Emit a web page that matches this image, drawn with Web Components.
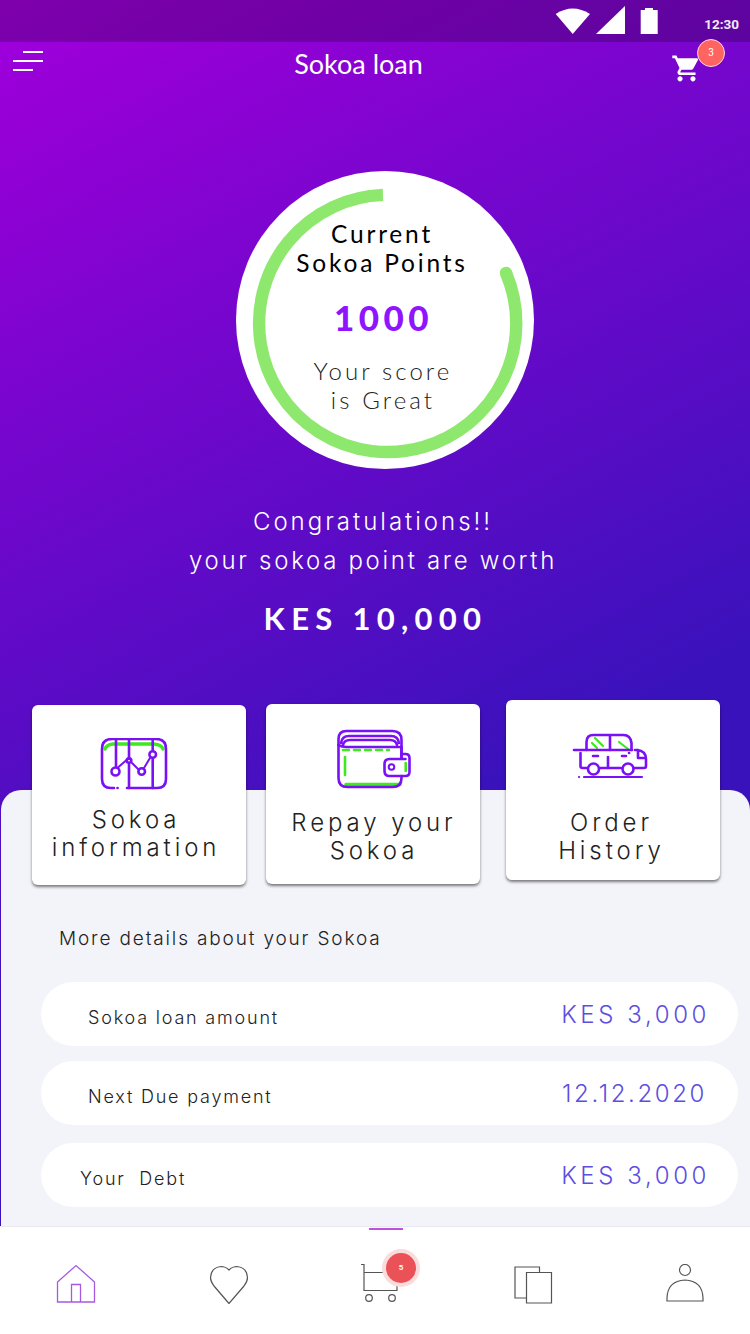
<!DOCTYPE html>
<html>
<head>
<meta charset="utf-8">
<title>Sokoa loan</title>
<style>
  html, body { margin: 0; padding: 0; }
  body { width: 750px; height: 1334px; overflow: hidden; font-family: "Lato", sans-serif; }
  info-card svg { display: block; }
</style>
</head>
<body>
<sokoa-app>
  <status-bar time="12:30"></status-bar>
  <app-header title="Sokoa loan" count="3"></app-header>
  <score-ring points="1000"></score-ring>
  <worth-note amount="KES 10,000"></worth-note>

  <card-row>
    <info-card style="--top:5px;--pad:33px;--gap:16px;--shift:-6px;--icon:-10px">
      <svg slot="icon" width="68" height="52" viewBox="100 738 68 52" fill="none" stroke="#7a10f5" stroke-width="2.6" stroke-linecap="round" stroke-linejoin="round">
        <path d="M105 749q1-4 8-5h41q8 1 9 5" stroke="#3fe81f" stroke-width="3.4"/>
        <path d="M114 788h-3q-9 0-9-9v-30q0-10 10-10h44q10 0 10 10v30q0 9-9 9h-30"/>
        <path d="M117.5 788h.1"/>
        <path d="M116 740v27M129 740v19M129 764v24M152.700 740v10M152.700 759v29"/>
        <circle cx="115.500" cy="771.500" r="4"/><circle cx="129" cy="760.500" r="2.300"/><circle cx="141.700" cy="771.500" r="3.300"/><circle cx="152.700" cy="754.500" r="3.300"/>
        <path d="M118.500 767l7.500-6.500M132 763l6 6M144 768l6-10" stroke-width="2"/>
      </svg>
      Sokoa<br>information
    </info-card>
    <info-card style="--top:4px;--pad:25px;--gap:20px;--shift:2px;--icon:2px">
      <svg slot="icon" width="76" height="60" viewBox="336 729 76 60" fill="none" stroke="#7a10f5" stroke-width="2.6" stroke-linecap="round" stroke-linejoin="round">
        <path d="M346 784.500h54" stroke="#3fe81f" stroke-width="3.400"/>
        <path d="M343 750h46" stroke="#3fe81f" stroke-dasharray="6 5"/>
        <path d="M345 757v18M405.700 763v8" stroke="#3fe81f" stroke-width="2.600"/>
        <path d="M338.500 745v-6q0-8 8-8h46q9 0 9 9v18"/>
        <path d="M341 743q1-7 8-7h42q7 0 8 7M343 745q1-5 7-5h40q6 0 7 5"/>
        <path d="M338.500 745v33q0 9 9 9h45q9 0 9-9v-2"/>
        <path d="M338.500 745q3 2 8 2h55v11"/>
        <path d="M401.500 754h4q4 0 4 4v14q0 4-4 4h-16q-5 0-5-5v-7q0-5 5-5h16"/>
        <circle cx="391.500" cy="767" r="2.800" stroke-width="2"/>
      </svg>
      Repay your<br>Sokoa
    </info-card>
    <info-card style="--top:0px;--pad:33px;--gap:30px;--lead:6px;--shift:-3px;--icon:-6px">
      <svg slot="icon" width="76" height="46" viewBox="572 733 76 46" fill="none" stroke="#7a10f5" stroke-width="2.600" stroke-linecap="round" stroke-linejoin="round">
        <path d="M595 738l8 8M592 743l5 5M619 742l9 7" stroke="#3fe81f" stroke-width="2.200"/>
        <path d="M574 750h58"/>
        <path d="M586.500 750v-8q0-7 7-7h30q7 0 8 8v7M610 735v15"/>
        <path d="M580.500 753v13q0 2 2 2h5M600 768h21M634 768h10q2 0 2-2v-7q0-8-9-9h-2M638 750v8h8"/>
        <circle cx="593.500" cy="769" r="5.500"/><circle cx="628" cy="769" r="5.500"/>
        <path d="M593 756h5M608 757v11M622 756h4M629 753h.1"/>
        <path d="M579 777h.1M584 777h58" stroke-width="2.200"/>
      </svg>
      Order<br>History
    </info-card>
  </card-row>

  <detail-panel heading="More details about your Sokoa">
    <detail-row label="Sokoa loan amount" value="KES 3,000"></detail-row>
    <detail-row style="--after:15px;--end:31px;--space:2.600px" label="Next Due payment" value="12.12.2020"></detail-row>
    <detail-row style="--after:18px;--inset:39px" label="Your  Debt" value="KES 3,000"></detail-row>
  </detail-panel>

  <bottom-nav count="5"></bottom-nav>
</sokoa-app>

<script>
// every element keeps its own markup and styles in an open shadow root
function shadow(el, html) {
  el.attachShadow({mode: 'open'}).innerHTML = html;
}

class SokoaApp extends HTMLElement {
  connectedCallback() {
    shadow(this, `<style>
      :host { display: flex; flex-direction: column; width: 750px; height: 1334px;
        background: linear-gradient(152deg, #a200de 0, #9500d6 120px, #3a12bc 920px, #3a12bc 100%); color: #000; }
    </style><slot></slot>`);
  }
}

class StatusBar extends HTMLElement {
  connectedCallback() {
    shadow(this, `<style>
      :host { display: flex; align-items: flex-start; justify-content: flex-end; height: 42px; flex: none;
        background: rgba(0,0,0,.22); }
      svg { display: block; margin-top: 6px; }
      span { font: 700 13.500px/20px Roboto, sans-serif; color: #f4e9fa; margin: 14px 11px 0 46px; }
    </style>
    <svg width="104" height="30" viewBox="554 6 104 30" fill="#fff">
      <path d="M555.700 14Q572.700 3 590 14L572.700 34Z"/>
      <path d="M596 34L625 6V34Z"/>
      <path d="M645 10V8h8v2h4.700v24H640.700V10Z"/>
    </svg>
    <span>${this.getAttribute('time')}</span>`);
  }
}

class AppHeader extends HTMLElement {
  connectedCallback() {
    shadow(this, `<style>
      :host { display: flex; height: 44px; flex: none; color: #fff; }
      .menu { display: flex; flex-direction: column; gap: 7px; margin: 9px 0 0 13px; width: 30px; }
      .menu i { display: block; height: 2px; background: #fff; }
      .menu i:nth-child(1) { margin-left: 10px; }
      .menu i:nth-child(3) { margin-right: 10px; }
      h1 { flex: 1; margin: 0; padding-left: 2px; text-align: center; font: 400 27px/44px Lato, sans-serif; }
      .cart { position: relative; width: 78px; }
      .cart svg { display: block; margin: 11px 0 0 -1px; }
      .cart b { position: absolute; left: 25px; top: -3px; width: 26px; height: 26px; line-height: 26px; border-radius: 50%;
        border: 1px solid #ffd9df; background: #ff6461; text-align: center; font: 400 10px/26px Roboto, sans-serif; color: #fff; }
    </style>
    <div class="menu"><i></i><i></i><i></i></div>
    <h1>${this.getAttribute('title')}</h1>
    <div class="cart">
      <svg width="31" height="31" viewBox="0 0 24 24" fill="#fff"><path d="M7 18c-1.100 0-1.990.9-1.990 2S5.900 22 7 22s2-.9 2-2-.9-2-2-2zM1 2v2h2l3.600 7.590-1.350 2.450c-.16.28-.25.61-.25.96 0 1.100.9 2 2 2h12v-2H7.420c-.14 0-.25-.11-.25-.25l.03-.12.9-1.630h7.450c.75 0 1.410-.41 1.750-1.030l3.580-6.490c.08-.14.12-.31.12-.48 0-.55-.45-1-1-1H5.210l-.94-2H1zm16 16c-1.100 0-1.990.9-1.990 2s.89 2 1.990 2 2-.9 2-2-.9-2-2-2z"/></svg>
      <b>${this.getAttribute('count')}</b>
    </div>`);
  }
}

class ScoreRing extends HTMLElement {
  connectedCallback() {
    shadow(this, `<style>
      :host { display: grid; width: 298px; height: 298px; flex: none; margin: 85px 0 0 236px; border-radius: 50%;
        background: #fff; font-family: Lato, sans-serif; }
      svg, .text { grid-area: 1 / 1; }
      svg { display: block; }
      .text { text-align: center; padding: 48px 6px 0 0; }
      .title { font-size: 24.500px; line-height: 29px; font-weight: 400; letter-spacing: 2.800px; color: #000; }
      .points { font-size: 35px; line-height: 46px; font-weight: 900; letter-spacing: 4.400px; color: #8f14ff; margin: 17px 0 0 3px; }
      .note { font-size: 24px; line-height: 29px; font-weight: 300; letter-spacing: 3.100px; color: #222; margin: 15.500px 0 0 2px; }
    </style>
    <svg width="298" height="298" viewBox="236 171 298 298" fill="none">
      <path d="M383 194.900A128.600 128.600 0 1 0 506 273" stroke="#8fe86e" stroke-width="12.400"/>
      <circle cx="506" cy="273" r="6.200" fill="#8fe86e"/>
    </svg>
    <div class="text">
      <div class="title">Current<br>Sokoa Points</div>
      <div class="points">${this.getAttribute('points')}</div>
      <div class="note">Your score<br>is Great</div>
    </div>`);
  }
}

class WorthNote extends HTMLElement {
  connectedCallback() {
    shadow(this, `<style>
      :host { display: block; flex: none; text-align: center; color: #fff; padding-right: 4px; margin-top: 32.500px; }
      p { margin: 0; font: 300 24px/39px Inter, sans-serif; letter-spacing: 2.700px; }
      p span { letter-spacing: 3px; }
      strong { display: block; margin: 18.500px 0 0 5px; font: 700 31px/40px Lato, sans-serif; letter-spacing: 6.300px; }
    </style>
    <p><span>Congratulations!!</span><br>your sokoa point are worth</p>
    <strong>${this.getAttribute('amount')}</strong>`);
  }
}

class CardRow extends HTMLElement {
  connectedCallback() {
    shadow(this, `<style>
      :host { display: flex; align-items: flex-start; gap: 20px; flex: none; height: 185px; margin-top: 62px;
        padding-left: 32px; position: relative; z-index: 1; }
    </style><slot></slot>`);
  }
}

class InfoCard extends HTMLElement {
  connectedCallback() {
    shadow(this, `<style>
      :host { display: flex; flex-direction: column; align-items: center; box-sizing: border-box; width: 214px; height: 180px;
        margin-top: var(--top, 0); margin-left: var(--lead, 0); padding-top: var(--pad, 33px);
        background: #fff; border-radius: 6px; box-shadow: 0 2px 3px rgba(0,0,0,.5); }
      ::slotted(svg) { margin-left: var(--icon, 0); }
      .label { margin: var(--gap, 16px) 0 0 var(--shift, 0); text-align: center; color: #222;
        font: 300 24px/28px Inter, sans-serif; letter-spacing: 3.900px; }
    </style>
    <slot name="icon"></slot>
    <div class="label"><slot></slot></div>`);
  }
}

class DetailPanel extends HTMLElement {
  connectedCallback() {
    shadow(this, `<style>
      :host { display: block; flex: 1; min-height: 0; margin: -95px 0 0 1px; padding: 137px 12px 0 40px;
        background: #f3f3fa; border-radius: 20px 20px 0 0; }
      h2 { margin: 0 0 31px -22px; padding-left: 40px; font: 300 19px/24px Inter, sans-serif; letter-spacing: 1.850px; color: #222; }
    </style>
    <h2>${this.getAttribute('heading')}</h2>
    <slot></slot>`);
  }
}

class DetailRow extends HTMLElement {
  connectedCallback() {
    shadow(this, `<style>
      :host { display: flex; align-items: center; justify-content: space-between; height: 64px; box-sizing: border-box;
        margin-top: var(--after, 0); padding: 0 var(--end, 28px) 0 var(--inset, 47px); background: #fff; border-radius: 32px; }
      .label { padding-top: 8px; white-space: pre; font: 300 18px/24px Inter, sans-serif; letter-spacing: 1.800px; color: #222; }
      .value { padding-top: 2px; font: 300 24px/28px Inter, sans-serif; letter-spacing: var(--space, 3.600px); color: #5b4ee0; }
    </style>
    <span class="label">${this.getAttribute('label')}</span>
    <span class="value">${this.getAttribute('value')}</span>`);
  }
}

class BottomNav extends HTMLElement {
  connectedCallback() {
    shadow(this, `<style>
      :host { display: grid; grid-template-columns: 153px 151px 154px 151px 40px; align-items: start; height: 108px; flex: none; box-sizing: border-box;
        padding-left: 56px; background: #fff; border-top: 1px solid #e8e8f2; position: relative; }
      svg { display: block; margin-top: 37px; }
      .active { position: relative; }
      .mark { position: absolute; left: 369px; top: 1px; width: 34px; height: 2px; background: #c050e0; }
      b { position: absolute; left: 26px; top: 26px; width: 30px; height: 30px; border-radius: 50%; background: #ea5257;
        box-shadow: 0 0 0 4px #fbdcdc; color: #fff; text-align: center; font: 700 8px/30px Roboto, sans-serif; }
    </style>
    <i class="mark"></i>
    <svg width="40" height="40" viewBox="56 1263 40 40" fill="none" stroke="#a65ae0" stroke-width="1.300">
      <path d="M57.500 1301V1281L76 1264.500 94.500 1281V1301ZM71.500 1301V1283.500H80.500V1301"/>
    </svg>
    <svg width="40" height="40" viewBox="209 1263 40 40" fill="none" stroke="#555" stroke-width="1.200">
      <path d="M229 1302.500L214 1285Q210.500 1280.500 210.500 1276.500 211 1266.500 221 1265.500 225.500 1265.500 229 1269 232.500 1265.500 237 1265.500 247 1266.500 247.500 1276.500 247.500 1280.500 244 1285Z"/>
    </svg>
    <div class="active">
      <svg width="44" height="40" viewBox="360 1263 44 40" fill="none" stroke="#555" stroke-width="1.200">
        <path d="M361 1263.500H364V1289.500H397V1271M364 1271.500H390"/>
        <circle cx="369" cy="1297" r="3.300"/><circle cx="392" cy="1297" r="3.300"/>
      </svg>
      <b>${this.getAttribute('count')}</b>
    </div>
    <svg width="40" height="40" viewBox="514 1263 40 40" fill="none" stroke="#555" stroke-width="1.200">
      <path d="M526 1297H515V1266H539.500V1271"/><path d="M526.500 1271.500H551.500V1302H526.500Z"/>
    </svg>
    <svg width="40" height="40" viewBox="665 1263 40 40" fill="none" stroke="#555" stroke-width="1.200">
      <circle cx="685" cy="1269" r="5.500"/>
      <path d="M667 1300V1297Q667.500 1280 685 1279 702.500 1280 703 1297V1300Z"/>
    </svg>`);
  }
}

customElements.define('sokoa-app', SokoaApp);
customElements.define('status-bar', StatusBar);
customElements.define('app-header', AppHeader);
customElements.define('score-ring', ScoreRing);
customElements.define('worth-note', WorthNote);
customElements.define('card-row', CardRow);
customElements.define('info-card', InfoCard);
customElements.define('detail-panel', DetailPanel);
customElements.define('detail-row', DetailRow);
customElements.define('bottom-nav', BottomNav);
</script>
</body>
</html>
